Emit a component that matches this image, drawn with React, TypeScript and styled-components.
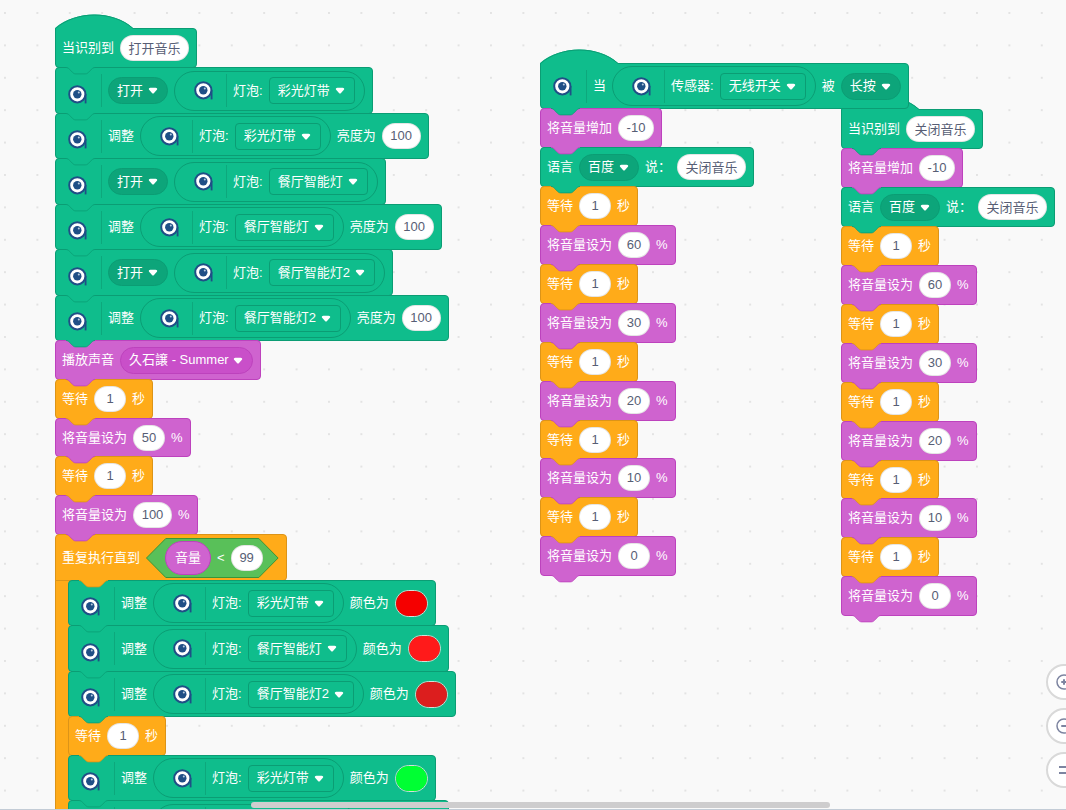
import React from 'react';
import styled, { createGlobalStyle, css } from 'styled-components';

type Kind = 'device' | 'sound' | 'control' | 'operator';

const palette: Record<Kind, { fill: string; edge: string; field: string }> = {
  device: { fill: '#0fbd8c', edge: '#0b9d74', field: '#0da57a' },
  sound: { fill: '#cf63cf', edge: '#bd42bd', field: '#c94fc9' },
  control: { fill: '#ffab19', edge: '#dc9418', field: '#ec9c13' },
  operator: { fill: '#59c059', edge: '#389438', field: '#46b946' },
};

const GlobalStyle = createGlobalStyle`
  * { box-sizing: border-box; }
  body {
    margin: 0;
    background: #f9f9f9;
    color: #fff;
    font: 13px/16px "Liberation Sans", "Noto Sans CJK SC", sans-serif;
  }
  input, select, button { font: inherit; margin: 0; }
`;

const Workspace = styled.main`
  position: relative;
  height: 100vh;
  overflow: hidden;
  background: #f9f9f9;
  border-bottom: 1px solid #c3ccd6;
`;

const GridCanvas = styled.svg`
  position: absolute;
  inset: 0;
  width: 100%;
  height: 100%;
`;

const Stack = styled.section<{ $x: number; $y: number }>`
  position: absolute;
  left: ${p => p.$x}px;
  top: ${p => p.$y}px;
  isolation: isolate;
  display: flex;
  flex-direction: column;
  align-items: flex-start;
`;

const Row = styled.div<{ $kind: Kind; $tall?: boolean }>`
  position: relative;
  display: flex;
  align-items: center;
  gap: 6px;
  height: 40px;
  margin-bottom: -1px;
  padding: 0 7px 0 6px;
  white-space: nowrap;
  background: ${p => palette[p.$kind].fill};
  border: 1px solid ${p => palette[p.$kind].edge};
  border-radius: 4px;

  &:nth-child(10n) { height: 39px; }

  ${p => p.$tall && css`
    &:nth-child(odd) { height: 46px; }
    &:nth-child(even) { height: 47px; }
  `}
`;

const LoopRow = styled(Row)`
  min-height: 47px;
  border-bottom-left-radius: 0;
`;

const BumpShape = styled.svg<{ $inset?: boolean }>`
  position: absolute;
  z-index: 1;
  top: 100%;
  left: ${p => (p.$inset ? 23 : 10)}px;
  width: 29px;
  height: 8px;
`;

const HatShape = styled.svg`
  position: absolute;
  left: -1px;
  bottom: calc(100% - 3px);
  width: 80px;
  height: 18px;
`;

const Label = styled.span`
  flex: none;
`;

const IconCell = styled.span<{ $variant: 'block' | 'hat' | 'reporter' }>`
  display: flex;
  align-items: center;
  align-self: center;
  height: 33px;
  padding-left: ${p => (p.$variant === 'reporter' ? 19 : 6)}px;
  padding-right: ${p => (p.$variant === 'reporter' ? 13 : 14)}px;
  padding-top: ${p => (p.$variant === 'block' ? 7 : 0)}px;
  border-right: 1px solid #0da87c;
`;

const Reporter = styled.span`
  display: flex;
  align-items: center;
  gap: 6px;
  height: 40px;
  padding-right: 9px;
  border: 1px solid #0b9d74;
  border-radius: 20px;
`;

const Reading = styled.span`
  display: flex;
  align-items: center;
  height: 34px;
  padding: 0 9px;
  background: #cf63cf;
  border: 1px solid #bd42bd;
  border-radius: 17px;
`;

const Condition = styled.span`
  position: relative;
  display: flex;
  align-items: center;
  height: 40px;
  padding: 0 16px 0 19px;
`;

const ConditionShape = styled.svg`
  position: absolute;
  inset: 0;
  width: 100%;
  height: 100%;
`;

const ConditionBody = styled.span`
  position: relative;
  display: flex;
  align-items: center;
  gap: 6px;
`;

const DropdownBox = styled.span`
  position: relative;
  display: flex;
  align-items: center;
`;

const DropdownSelect = styled.select<{ $kind: Kind; $square?: boolean }>`
  appearance: none;
  height: 27px;
  padding: 0 23px 0 8px;
  color: #fff;
  background: ${p => (p.$square ? palette[p.$kind].fill : palette[p.$kind].field)};
  border: 1px solid ${p => palette[p.$kind].edge};
  border-radius: ${p => (p.$square ? 4 : 14)}px;
`;

const DropdownArrow = styled.svg`
  position: absolute;
  right: 10px;
  width: 10px;
  height: 7px;
  pointer-events: none;
`;

const Field = styled.input<{ $width: number }>`
  width: ${p => p.$width}px;
  height: 26px;
  padding: 0 0 1px;
  text-align: center;
  color: #575e75;
  background: #fff;
  border: 1px solid rgba(0, 0, 0, 0.1);
  border-radius: 13px;
`;

const ColorField = styled.input`
  appearance: none;
  width: 33px;
  height: 27px;
  padding: 0;
  background: none;
  border: 1px solid #d5dfd8;
  border-radius: 14px;
  overflow: hidden;

  &::-webkit-color-swatch-wrapper { padding: 0; }
  &::-webkit-color-swatch { border: 0; border-radius: 0; }
`;

const Loop = styled.div`
  display: flex;
  flex-direction: column;
  align-items: flex-start;
`;

const LoopBody = styled.div`
  display: flex;
  flex-direction: column;
  align-items: flex-start;
  padding-left: 12px;
  background: linear-gradient(#ffab19, #ffab19) 0 0 / 14px 100% no-repeat;
  border-left: 1px solid #dc9418;
`;

const Scrollbar = styled.div`
  position: absolute;
  z-index: 2;
  bottom: 1px;
  left: 251px;
  right: 236px;
  height: 6px;
  background: #cecdce;
  border-radius: 3px;
`;

const ZoomControls = styled.nav`
  position: absolute;
  right: -16px;
  bottom: 21px;
  display: flex;
  flex-direction: column;
  gap: 8px;
`;

const ZoomButton = styled.button`
  display: flex;
  align-items: center;
  justify-content: center;
  width: 36px;
  height: 36px;
  padding: 0;
  background: #fff;
  border: 2px solid #d9d9d9;
  border-radius: 50%;
`;

const Bump = ({ kind, inset }: { kind: Kind; inset?: boolean }) => (
  <BumpShape $inset={inset} viewBox="0 0 36 10" preserveAspectRatio="none" aria-hidden="true">
    <path
      d="M0 0 V.6 C2 .6 3 1.6 4 2.6 L8 6.6 C9 7.6 10 8.6 12 8.6 H24 C26 8.6 27 7.6 28 6.6 L32 2.6 C33 1.6 34 .6 36 .6 V0 Z"
      fill={palette[kind].fill}
    />
    <path
      d="M0 .6 C2 .6 3 1.6 4 2.6 L8 6.6 C9 7.6 10 8.6 12 8.6 H24 C26 8.6 27 7.6 28 6.6 L32 2.6 C33 1.6 34 .6 36 .6"
      fill="none"
      stroke={palette[kind].edge}
    />
  </BumpShape>
);

const Hat = () => (
  <HatShape viewBox="0 0 80 18" aria-hidden="true">
    <path d="M0 18 V14 C21 -4 58 -4 78 14 L80 15 V18 Z" fill="#0fbd8c" />
    <path d="M.5 18 V14.5 C21 -3.5 58 -3.5 78 14.5 H80" fill="none" stroke="#0b9d74" />
  </HatShape>
);

const DeviceIcon = () => (
  <svg width="19" height="19" viewBox="0 0 19 19" aria-hidden="true">
    <path d="M17.6 9 V18.4" stroke="#1f4f86" strokeWidth="1.8" />
    <circle cx="9.3" cy="9.3" r="8.1" fill="#fff" stroke="#1f4f86" strokeWidth="2" />
    <circle cx="9.3" cy="9.3" r="4.2" fill="#1f4f86" />
    <circle cx="10.8" cy="7.6" r="1" fill="#b9cbe0" />
  </svg>
);

const Dropdown = ({ label, value, kind = 'device', square }: { label: string; value: string; kind?: Kind; square?: boolean }) => (
  <DropdownBox>
    <DropdownSelect aria-label={label} $kind={kind} $square={square} defaultValue={value}>
      <option>{value}</option>
    </DropdownSelect>
    <DropdownArrow viewBox="0 0 12.71 8.79" aria-hidden="true">
      <path
        fill="#fff"
        d="M6.36,8.2a1.43,1.43,0,0,1-1-.42L1.42,3.45a1.44,1.44,0,0,1,0-2c0.56-.56,9.31-0.56,9.87,0a1.44,1.44,0,0,1,0,2L7.37,7.78A1.43,1.43,0,0,1,6.36,8.2Z"
      />
    </DropdownArrow>
  </DropdownBox>
);

const fieldWidth = (value: string) => {
  if (/^[\d-]+$/.test(value)) {
    if (value.startsWith('-')) return 36;
    return value.length > 2 ? 39 : 32;
  }
  return 69;
};

const Input = ({ label, value }: { label: string; value: string }) => (
  <Field aria-label={label} defaultValue={value} $width={fieldWidth(value)} />
);

const DevicePicker = ({ type, name }: { type: string; name: string }) => (
  <Reporter>
    <IconCell $variant="reporter"><DeviceIcon /></IconCell>
    <Label>{type}:</Label>
    <Dropdown label={type} value={name} square />
  </Reporter>
);

const SwitchOn = ({ name }: { name: string }) => (
  <Row $kind="device" $tall>
    <IconCell $variant="block"><DeviceIcon /></IconCell>
    <Dropdown label="动作" value="打开" />
    <DevicePicker type="灯泡" name={name} />
    <Bump kind="device" />
  </Row>
);

const Adjust = ({ name, brightness, color }: { name: string; brightness?: string; color?: string }) => (
  <Row $kind="device" $tall>
    <IconCell $variant="block"><DeviceIcon /></IconCell>
    <Label>调整</Label>
    <DevicePicker type="灯泡" name={name} />
    <Label>{color ? '颜色为' : '亮度为'}</Label>
    {color
      ? <ColorField type="color" aria-label="颜色为" defaultValue={color} />
      : <Input label="亮度为" value={brightness ?? ''} />}
    <Bump kind="device" />
  </Row>
);

const WhenHeard = ({ phrase }: { phrase: string }) => (
  <Row $kind="device">
    <Hat />
    <Label>当识别到</Label>
    <Input label="当识别到" value={phrase} />
    <Bump kind="device" />
  </Row>
);

const Wait = () => (
  <Row $kind="control">
    <Label>等待</Label>
    <Input label="等待" value="1" />
    <Label>秒</Label>
    <Bump kind="control" />
  </Row>
);

const SetVolume = ({ value }: { value: string }) => (
  <Row $kind="sound">
    <Label>将音量设为</Label>
    <Input label="将音量设为" value={value} />
    <Label>%</Label>
    <Bump kind="sound" />
  </Row>
);

const ChangeVolume = ({ value }: { value: string }) => (
  <Row $kind="sound">
    <Label>将音量增加</Label>
    <Input label="将音量增加" value={value} />
    <Bump kind="sound" />
  </Row>
);

const Say = ({ text }: { text: string }) => (
  <Row $kind="device">
    <Label>语言</Label>
    <Dropdown label="语言" value="百度" />
    <Label>说：</Label>
    <Input label="说" value={text} />
    <Bump kind="device" />
  </Row>
);

const FadeOut = () => (
  <>
    {['60', '30', '20', '10', '0'].map(level => (
      <React.Fragment key={level}>
        <Wait />
        <SetVolume value={level} />
      </React.Fragment>
    ))}
  </>
);

const MusicOnScript = () => (
  <Stack $x={55} $y={28}>
    <WhenHeard phrase="打开音乐" />
    <SwitchOn name="彩光灯带" />
    <Adjust name="彩光灯带" brightness="100" />
    <SwitchOn name="餐厅智能灯" />
    <Adjust name="餐厅智能灯" brightness="100" />
    <SwitchOn name="餐厅智能灯2" />
    <Adjust name="餐厅智能灯2" brightness="100" />
    <Row $kind="sound">
      <Label>播放声音</Label>
      <Dropdown label="播放声音" value="久石譲 - Summer" kind="sound" />
      <Bump kind="sound" />
    </Row>
    <Wait />
    <SetVolume value="50" />
    <Wait />
    <SetVolume value="100" />
    <Loop>
      <LoopRow $kind="control" $tall>
        <Label>重复执行直到</Label>
        <Condition>
          <ConditionShape viewBox="0 0 134 40" preserveAspectRatio="none" aria-hidden="true">
            <path d="M20 .5 H114 L133.5 20 L114 39.5 H20 L.5 20 Z" fill="#59c059" stroke="#389438" />
          </ConditionShape>
          <ConditionBody>
            <Reading>音量</Reading>
            <Label>&lt;</Label>
            <Input label="小于" value="99" />
          </ConditionBody>
        </Condition>
        <Bump kind="control" inset />
      </LoopRow>
      <LoopBody>
        <Adjust name="彩光灯带" color="#f50000" />
        <Adjust name="餐厅智能灯" color="#ff1a1a" />
        <Adjust name="餐厅智能灯2" color="#dc1e1e" />
        <Wait />
        <Adjust name="彩光灯带" color="#00ff33" />
        <Adjust name="餐厅智能灯" color="#1aff1a" />
      </LoopBody>
    </Loop>
  </Stack>
);

const VoiceOffScript = () => (
  <Stack $x={841} $y={109}>
    <WhenHeard phrase="关闭音乐" />
    <ChangeVolume value="-10" />
    <Say text="关闭音乐" />
    <FadeOut />
  </Stack>
);

const SwitchOffScript = () => (
  <Stack $x={540} $y={63}>
    <Row $kind="device" $tall>
      <Hat />
      <IconCell $variant="hat"><DeviceIcon /></IconCell>
      <Label>当</Label>
      <DevicePicker type="传感器" name="无线开关" />
      <Label>被</Label>
      <Dropdown label="被" value="长按" />
      <Bump kind="device" />
    </Row>
    <ChangeVolume value="-10" />
    <Say text="关闭音乐" />
    <FadeOut />
  </Stack>
);

const ZoomGlyph = ({ plus }: { plus?: boolean }) => (
  <svg width="18" height="18" viewBox="0 0 18 18" fill="none" stroke="#7d84a0" strokeWidth="2" strokeLinecap="round" aria-hidden="true">
    <circle cx="9" cy="9" r="7" strokeWidth="1.5" />
    <path d={plus ? 'M7 9 H11 M9 7 V11' : 'M7 9 H11'} />
  </svg>
);

export default function App() {
  return (
    <>
      <GlobalStyle />
      <Workspace>
        <GridCanvas aria-hidden="true">
          <defs>
            <pattern id="dots" width="40" height="40" patternUnits="userSpaceOnUse" patternTransform="translate(4 12) scale(.81)">
              <rect width="2.4" height="2.4" fill="#e3e3e3" />
            </pattern>
          </defs>
          <rect width="100%" height="100%" fill="url(#dots)" />
        </GridCanvas>
        <MusicOnScript />
        <VoiceOffScript />
        <SwitchOffScript />
        <ZoomControls aria-label="缩放">
          <ZoomButton type="button" aria-label="放大"><ZoomGlyph plus /></ZoomButton>
          <ZoomButton type="button" aria-label="缩小"><ZoomGlyph /></ZoomButton>
          <ZoomButton type="button" aria-label="重置">
            <svg width="12" height="10" viewBox="0 0 12 10" stroke="#7d84a0" strokeWidth="2" aria-hidden="true">
              <path d="M1 2 H11 M1 8 H11" />
            </svg>
          </ZoomButton>
        </ZoomControls>
        <Scrollbar />
      </Workspace>
    </>
  );
}
